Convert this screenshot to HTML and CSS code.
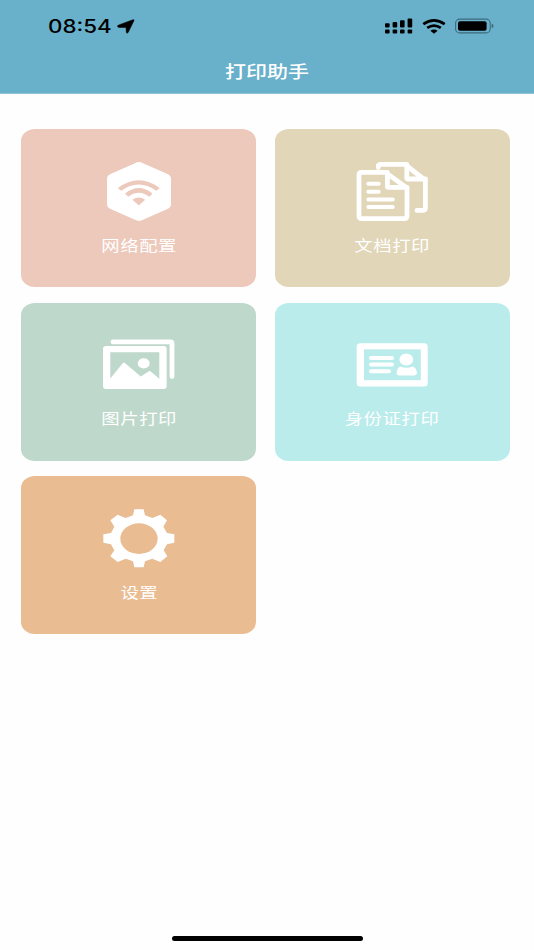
FILE: index.html
```
<!DOCTYPE html>
<html lang="zh-CN">
<head>
  <meta charset="UTF-8">
  <meta name="viewport" content="width=device-width, initial-scale=1.0">
  <title>打印助手</title>
  <link rel="stylesheet" href="styles.css">
</head>
<body>
  <header class="header">
    <div class="status">
      <span class="time">08:54</span>
      <svg class="location" width="18" height="15" viewBox="0 0 18 15"><path d="M1.2 6.2 15.8.8Q17.6.2 16.9 1.8L11.3 13.3Q9.7 15.3 9.3 13.2L9 8.4H1.8Q-.8 7.6 1.2 6.2z" stroke="#000" stroke-width=".5"/></svg>
      <svg class="signal" width="28" height="16" viewBox="0 0 28 16">
        <rect x="0" y="5.2" width="4.6" height="4.4" rx="1"/>
        <rect x="7.6" y="4" width="4.6" height="5.6" rx="1"/>
        <rect x="15" y="2.2" width="4.6" height="7.4" rx="1"/>
        <rect x="22.6" y=".6" width="4.6" height="9" rx="1"/>
        <rect x="0" y="11.6" width="4.6" height="4" rx="1"/>
        <rect x="7.6" y="11.6" width="4.6" height="4" rx="1"/>
        <rect x="15" y="11.6" width="4.6" height="4" rx="1"/>
        <rect x="22.6" y="11.6" width="4.6" height="4" rx="1"/>
      </svg>
      <svg class="wifi" width="24" height="15" viewBox="0 0 24 15">
        <path d="M1.3 5.2Q12-2.4 22.7 5.2M5.2 8.9Q12 4.2 18.8 8.9" fill="none" stroke="#000" stroke-width="2.7"/>
        <path d="M8.4 11.7Q12 9.1 15.6 11.7L12.6 14.2Q12 14.7 11.4 14.2z"/>
      </svg>
      <svg class="battery" width="39" height="16" viewBox="0 0 39 16">
        <rect x=".6" y="1.1" width="34.6" height="13.8" rx="4" fill="none" stroke="#3f6b7d" stroke-width="1.1"/>
        <rect x="3" y="3.2" width="28.6" height="9.6" rx="2"/>
        <path d="M36.6 5.8Q38.6 6.4 38.6 8T36.6 10.2z" fill="#3f6b7d"/>
      </svg>
    </div>
    <h1 class="title"><span class="wide">打印助手</span></h1>
  </header>

  <main class="menu">
    <div class="card network">
      <svg class="icon" viewBox="0 0 76 64">
        <path d="M34 4.2Q38 2 42 4.2L67 15.2Q70 16.7 70 19.5V45.5Q70 48.3 67 49.8L42 60.8Q38 63 34 60.8L9 49.8Q6 48.3 6 45.5V19.5Q6 16.7 9 15.2z"/>
        <path class="cut" d="M16.9 29Q37.8 13.4 58.7 29Q57.2 30.5 55.2 31.8Q37.8 19.4 20.2 31.8Q18.4 30.6 16.9 29zM24.1 34.5Q37.8 23.4 51.4 34.5Q50 36.2 48.2 37.7Q37.8 29.8 27.2 37.7Q25.5 36.2 24.1 34.5zM31.4 40.8Q37.8 36.2 44.2 40.8L38.6 45.8Q37.8 46.4 37 45.8z"/>
      </svg>
      <div class="label"><span class="wide">网络配置</span></div>
    </div>
    <div class="card document">
      <svg class="icon" viewBox="0 0 76 64">
        <g class="line">
          <path d="M7.5 13.4H31.5L53 29V57Q53 59.7 50 59.7H8Q5 59.7 5 57V16Q5 13.4 7.5 13.4z"/>
          <path d="M33.4 13.4V27.5Q33.4 28.3 34.5 28.3H53"/>
          <path d="M24.3 8.5V6.7Q24.3 5.4 26.5 5.4H51L71.4 21.5V49Q71.4 51.4 68.5 51.4H63"/>
          <path d="M52.8 5.4V19Q52.8 20 54 20H71.4"/>
        </g>
        <path class="line thin" d="M14.3 24.7H24.7M14.3 32.7H24.7M14.3 40.4H38.8M14.3 48.1H38.8"/>
      </svg>
      <div class="label"><span class="wide">文档打印</span></div>
    </div>
    <div class="card photo">
      <svg class="icon" viewBox="0 0 76 64">
        <path class="line" d="M12 9.9H69.5Q71 9.9 71 11.4V44.5"/>
        <rect x="2" y="14.1" width="63.7" height="42.9" rx="3"/>
        <path class="cut" d="M9.3 20.2H58.3V46.7L49.5 39.2Q48.8 38.6 47.9 39.2L39.8 44.6 23.8 31Q22.7 30.1 21.7 31.2L9.3 46.5z"/>
        <ellipse cx="42.7" cy="31.4" rx="6" ry="5.1"/>
      </svg>
      <div class="label"><span class="wide">图片打印</span></div>
    </div>
    <div class="card idcard">
      <svg class="icon" viewBox="0 0 76 64">
        <rect x="2.7" y="11.2" width="71" height="43.2" rx="3.5"/>
        <rect class="cut" x="10" y="17.4" width="56.8" height="30.8"/>
        <path class="line thin" d="M17 25.9H38M17 32.6H38M17 39.2H35"/>
        <ellipse cx="52.3" cy="27.5" rx="6.9" ry="6"/>
        <path d="M46.2 34.4Q52.5 37.3 58.6 34.4Q62.8 36.2 62.9 41Q62.9 43.4 60.5 43.4H45Q42.6 43.4 42.6 41Q42.8 36.2 46.2 34.4z"/>
      </svg>
      <div class="label"><span class="wide">身份证打印</span></div>
    </div>
    <div class="card settings">
      <svg class="icon" viewBox="33 17 228 192">
        <path d="M133 27H161L165 45 187 53 211 43 231 60 220 79 231 98 253 102V127L231 132 221 150 232 168 211 185 187 175 165 183 161 201H133L129 183 107 175 83 185 61 168 73 150 63 132 40 127V102L63 98 73 79 61 60 83 43 107 53 129 45z"/>
        <ellipse class="cut" cx="147" cy="115" rx="56" ry="46"/>
      </svg>
      <div class="label"><span class="wide">设置</span></div>
    </div>
  </main>

  <div class="home-bar"></div>
</body>
</html>
```
FILE: styles.css
```
* {
  box-sizing: border-box;
}

body {
  margin: 0;
  height: 950px;
  display: flex;
  flex-direction: column;
  overflow: hidden;
  background: #fefefe;
  font-family: Inter, "Noto Sans CJK SC", sans-serif;
}

svg {
  display: block;
  flex: none;
}

.header {
  height: 94px;
  background: #69b0cb;
  border-bottom: 1px solid #8fc4d8;
}

.status {
  display: flex;
  align-items: center;
  height: 48px;
  padding: 4px 40.5px 0 48px;
}

.time {
  width: 69px;
  padding-top: 1px;
  font-size: 18px;
  font-weight: 500;
  line-height: 20px;
  transform: scaleX(1.24);
  transform-origin: left;
}

.location {
  margin-top: 1px;
}

.signal {
  margin-left: auto;
}

.wifi {
  margin-left: 8.5px;
}

.battery {
  margin-left: 9px;
}

.title {
  margin: 0;
  padding-top: 1px;
  color: #fff;
  font-size: 17.5px;
  font-weight: 500;
  line-height: 46px;
  text-align: center;
}

/* lettering is wider than it is tall */
.wide {
  display: inline-block;
  transform: scaleX(1.2);
}

.menu {
  flex: 1;
  display: grid;
  grid-template-columns: 235px 235px;
  grid-auto-rows: 158px;
  gap: 15.4px 18.2px;
  padding: 35.4px 0 0 21.4px;
}

.card {
  display: flex;
  flex-direction: column;
  align-items: center;
  padding-top: 29.7px;
  border-radius: 14px / 12px;
  color: #fff;
}

.network {
  --bg: #edc9bb;
  background: var(--bg);
}

.document {
  --bg: #e1d6b8;
  background: var(--bg);
}

.photo {
  --bg: #bed8cb;
  background: var(--bg);
}

.idcard {
  --bg: #baecec;
  background: var(--bg);
}

.settings {
  --bg: #e9bc92;
  background: var(--bg);
}

.icon {
  width: 76px;
  height: 64px;
  fill: #fff;
}

.cut {
  fill: var(--bg);
}

.line {
  fill: none;
  stroke: #fff;
  stroke-width: 4.8;
  stroke-linecap: round;
  stroke-linejoin: round;
}

.thin {
  stroke-width: 4;
}

.label {
  margin-top: 11px;
  font-size: 15.3px;
  font-weight: 400;
  line-height: 24px;
}

.label .wide {
  padding-left: 0.5px;
  letter-spacing: 0.5px;
}

.home-bar {
  flex: none;
  align-self: center;
  width: 191px;
  height: 5px;
  margin-bottom: 9px;
  border-radius: 3px;
  background: #000;
}
```
